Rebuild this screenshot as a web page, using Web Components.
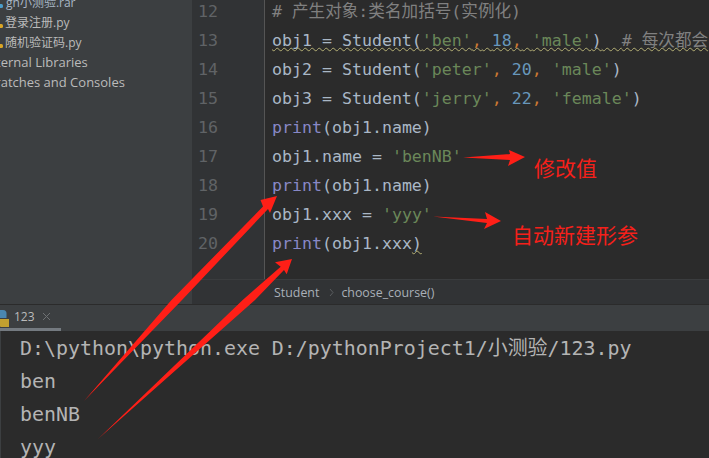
<!DOCTYPE html>
<html>
<head>
<meta charset="utf-8">
<style>
html,body{margin:0;padding:0;background:#2b2b2b;overflow:hidden}
</style>
</head>
<body>
<ide-window>
  <ide-sidebar slot="side">
    <tree-row icon="rar" indent="6" small><span style="color:#a9b7c6">gh小测验.rar</span></tree-row>
    <tree-row icon="py" indent="5" small>登录注册.py</tree-row>
    <tree-row icon="py" indent="5" small>随机验证码.py</tree-row>
    <tree-row indent="-18">External Libraries</tree-row>
    <tree-row indent="-18">Scratches and Consoles</tree-row>
  </ide-sidebar>
  <code-editor slot="editor">
    <code-line num="12"><span class="c"># 产生对象:类名加括号(实例化)</span></code-line>
    <code-line num="13" warn><span>obj1 = Student(</span><span class="s">'ben'</span><span class="k">,</span> <span class="n">18</span><span class="k">,</span> <span class="s">'male'</span><span>)</span>  <span class="c"># 每次都会</span></code-line>
    <code-line num="14"><span>obj2 = Student(</span><span class="s">'peter'</span><span class="k">,</span> <span class="n">20</span><span class="k">,</span> <span class="s">'male'</span><span>)</span></code-line>
    <code-line num="15"><span>obj3 = Student(</span><span class="s">'jerry'</span><span class="k">,</span> <span class="n">22</span><span class="k">,</span> <span class="s">'female'</span><span>)</span></code-line>
    <code-line num="16"><span class="b">print</span><span>(obj1.name)</span></code-line>
    <code-line num="17"><span>obj1.name = </span><span class="s">'benNB'</span></code-line>
    <code-line num="18"><span class="b">print</span><span>(obj1.name)</span></code-line>
    <code-line num="19"><span>obj1.xxx = </span><span class="s">'yyy'</span></code-line>
    <code-line num="20"><span class="b">print</span><span>(obj1.xxx</span><span class="w">)</span></code-line>
  </code-editor>
  <bread-crumbs slot="crumbs"><span>Student</span><span>choose_course()</span></bread-crumbs>
  <run-tabs slot="tabs">123</run-tabs>
  <run-console slot="console"><div>D:\python\python.exe D:/pythonProject1/小测验/123.py</div><div>ben</div><div>benNB</div><div>yyy</div></run-console>
  <red-notes slot="notes"></red-notes>
</ide-window>

<script>
class IdeWindow extends HTMLElement{
  constructor(){
    super();
    this.attachShadow({mode:'open'});
    this.shadowRoot.innerHTML=`
    <style>
    :host{display:block;position:relative;width:709px;height:458px;overflow:hidden;background:#2b2b2b}
    .top{display:flex;height:304px}
    .right{flex:1;min-width:0;display:flex;flex-direction:column;background:#2b2b2b}
    </style>
    <div class="top">
      <slot name="side"></slot>
      <div class="right"><slot name="editor"></slot><slot name="crumbs"></slot></div>
    </div>
    <slot name="tabs"></slot>
    <slot name="console"></slot>
    <slot name="notes"></slot>
    `;
  }
}
customElements.define('ide-window',IdeWindow);

class IdeSidebar extends HTMLElement{
  constructor(){
    super();
    this.attachShadow({mode:'open'});
    this.shadowRoot.innerHTML=`
    <style>
    :host{display:block;width:192px;flex:none;height:304px;overflow:hidden;background:#3c3f41;
      font:13px "Open Sans","Noto Sans CJK SC",sans-serif;color:#bbbbbb}
    .list{margin-top:-8px}
    </style>
    <div class="list"><slot></slot></div>
    `;
  }
}
customElements.define('ide-sidebar',IdeSidebar);

class TreeRow extends HTMLElement{
  constructor(){
    super();
    this.attachShadow({mode:'open'});
    const icon=this.getAttribute('icon');
    const indent=this.getAttribute('indent')||0;
    let svg='';
    if(icon==='py'){
      svg=`<svg width="3" height="4" viewBox="0 0 3 4"><path d="M0 0h1.5a1.5 1.5 0 0 1 1.5 1.5v1a1.5 1.5 0 0 1-1.5 1.5H0z" fill="#d9a526"/></svg>`;
    }else if(icon==='rar'){
      svg=`<svg width="3" height="4" viewBox="0 0 3 4"><path d="M0 0h1.5a1.5 1.5 0 0 1 1.5 1.5v1a1.5 1.5 0 0 1-1.5 1.5H0z" fill="#4a9cc9"/></svg>`;
    }
    this.shadowRoot.innerHTML=`
    <style>
    :host{display:flex;align-items:center;height:20px;white-space:nowrap;margin-left:${indent}px}
    :host([small]){font-size:12px}
    .ic{position:absolute;left:0;margin-top:8px;display:flex}
    </style>
    <span class="ic">${svg}</span><slot></slot>
    `;
  }
}
customElements.define('tree-row',TreeRow);

class CodeEditor extends HTMLElement{
  constructor(){
    super();
    this.attachShadow({mode:'open'});
    this.shadowRoot.innerHTML=`
    <style>
    :host{display:block;height:279px;overflow:hidden;
      background:linear-gradient(90deg,#313335 0,#313335 72px,#555555 72px,#555555 73px,#2b2b2b 73px)}
    .lines{margin-top:-3px}
    </style>
    <div class="lines"><slot></slot></div>
    `;
  }
}
customElements.define('code-editor',CodeEditor);

class CodeLine extends HTMLElement{
  constructor(){
    super();
    this.attachShadow({mode:'open'});
    this.shadowRoot.innerHTML=`
    <style>
    :host{display:flex;height:29px;white-space:pre;
      font:16.6px/29px "DejaVu Sans Mono","Noto Sans CJK SC",monospace;color:#a9b7c6}
    .num{width:80px;flex:none;box-sizing:border-box;padding-left:6px;color:#606366}
    .src{flex:1;min-width:0;white-space:pre;text-decoration-skip-ink:none}
    :host([warn]) .src{text-decoration:underline wavy #b3ae74 1px;text-underline-offset:1px}
    ::slotted(.s){color:#6a8759}
    ::slotted(.n){color:#6897bb}
    ::slotted(.k){color:#cc7832}
    ::slotted(.c){color:#808080}
    ::slotted(.b){color:#8888c6}
    ::slotted(.w){text-decoration:underline wavy #b3ae74 1px;text-underline-offset:1px}
    </style>
    <span class="num"></span><div class="src"><slot></slot></div>
    `;
    this.shadowRoot.querySelector('.num').textContent=this.getAttribute('num');
  }
}
customElements.define('code-line',CodeLine);

class BreadCrumbs extends HTMLElement{
  constructor(){
    super();
    this.attachShadow({mode:'open'});
    this.shadowRoot.innerHTML=`
    <style>
    :host{display:flex;align-items:center;gap:22px;height:25px;padding-left:82px;background:#313335;
      border-top:1px solid #3a3c3e;box-sizing:border-box;
      font:12.4px "Open Sans",sans-serif;color:#a9b0b8;position:relative}
    .sep{position:absolute;left:137px;top:8px}
    </style>
    <svg class="sep" width="5" height="9" viewBox="0 0 5 9"><path d="M1 1l3 3.5-3 3.5" fill="none" stroke="#5a5d60"/></svg>
    <slot></slot>
    `;
  }
}
customElements.define('bread-crumbs',BreadCrumbs);

class RunTabs extends HTMLElement{
  constructor(){
    super();
    this.attachShadow({mode:'open'});
    this.shadowRoot.innerHTML=`
    <style>
    :host{display:block;height:27px;box-sizing:border-box;background:#3c3f41;border-top:1px solid #2b2b2b;
      font:12px "Open Sans",sans-serif;color:#bbbbbb}
    .tab{width:61px;height:26px;box-sizing:border-box;display:flex;align-items:center;border-bottom:3px solid #747a80;overflow:hidden}
    svg{flex:none}
    .logo{margin-top:4px}
    .close{margin-left:7px}
    .label{margin-left:5px}
    </style>
    <div class="tab">
      <svg class="logo" width="9" height="17" viewBox="0 0 9 17"><path d="M-3 0h6a3.5 3.5 0 0 1 3.5 3.5V8H-3z" fill="#4a87b0"/><path d="M9 17H2a3 3 0 0 1-3-3V9h10z" fill="#c2a030"/></svg>
      <span class="label"><slot></slot></span>
      <svg class="close" width="9" height="9" viewBox="0 0 9 9"><path d="M1 1l7 7M8 1l-7 7" stroke="#6e7173" stroke-width="1"/></svg>
    </div>
    `;
  }
}
customElements.define('run-tabs',RunTabs);

class RunConsole extends HTMLElement{
  constructor(){
    super();
    this.attachShadow({mode:'open'});
    this.shadowRoot.innerHTML=`
    <style>
    :host{display:block;box-sizing:border-box;height:127px;overflow:hidden;padding:1px 0 0 19px;background:#2b2b2b;
      border-left:1px solid #3c3f41;
      font:19.93px/33px "DejaVu Sans Mono","Noto Sans CJK SC",monospace;color:#b4b4b4;white-space:nowrap}
    </style>
    <slot></slot>
    `;
  }
}
customElements.define('run-console',RunConsole);

// red marks drawn on top of the screenshot
class RedNotes extends HTMLElement{
  constructor(){
    super();
    this.attachShadow({mode:'open'});
    this.shadowRoot.innerHTML=`
    <style>
    :host{position:absolute;left:0;top:0;width:709px;height:458px;display:block;pointer-events:none}
    svg{position:absolute;left:0;top:0}
    .t{position:absolute;color:#f5201a;font:21px/24px "Noto Sans CJK SC",sans-serif;white-space:nowrap}
    </style>
    <svg width="709" height="458" viewBox="0 0 709 458">
      <g fill="#ff1f17">
        <path d="M463 157.5L510 154L509 150L525 157L508 166L510 160z"/>
        <path d="M433 216.5L487 219L485 212L501 221L484 229L487 223z"/>
        <path d="M84 401L171.5 300L263 206.5L260.5 200L277 196L270 213L268 209L182 300z"/>
        <path d="M98 439L242.7 300L280.7 266.7L275 262.3L292 259L286.7 274.3L284 270L255 300z"/>
      </g>
    </svg>
    <div class="t" style="left:534px;top:155px">修改值</div>
    <div class="t" style="left:512px;top:222px">自动新建形参</div>
    `;
  }
}
customElements.define('red-notes',RedNotes);
</script>
</body>
</html>
